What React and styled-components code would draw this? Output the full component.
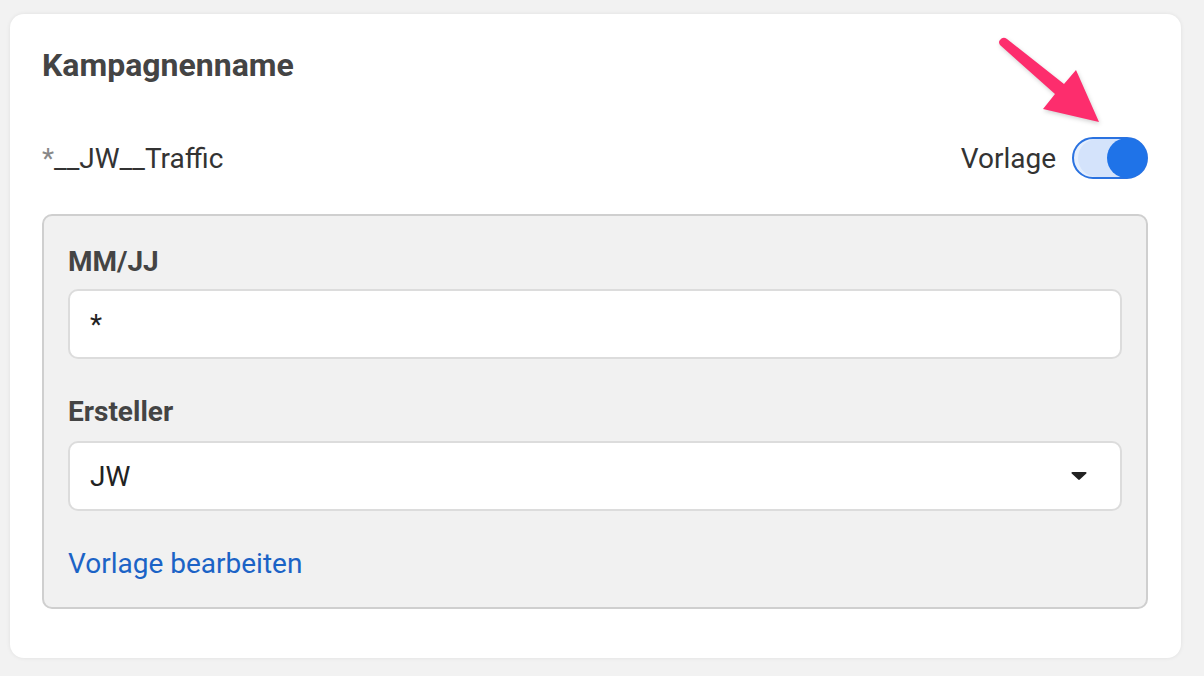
import React from "react";
import styled, { createGlobalStyle } from "styled-components";

const GlobalStyle = createGlobalStyle`
  html, body {
    margin: 0;
    padding: 0;
    background: #f2f2f2;
    font-family: Roboto, "Liberation Sans", Arial, sans-serif;
  }
`;

const Page = styled.div`
  padding: 14px 23px 18px 10px;
  position: relative;
`;

const Card = styled.div`
  background: #fff;
  border-radius: 14px;
  box-shadow: 0 0 4px rgba(0, 0, 0, 0.08);
  padding: 35px 33px 49px 32px;
  position: relative;
`;

const Title = styled.h2`
  margin: 0;
  font-size: 32px;
  line-height: 32px;
  font-weight: 700;
  color: #444;
`;

const Row = styled.div`
  display: flex;
  align-items: center;
  justify-content: space-between;
  height: 44px;
  margin-top: 55px;
`;

const Name = styled.span`
  font-size: 28px;
  color: #333;
`;

const Star = styled.span`
  color: #888;
`;

const ToggleWrap = styled.label`
  display: flex;
  align-items: center;
  gap: 16px;
  font-size: 28px;
  color: #333;
`;

const Track = styled.span`
  box-sizing: border-box;
  width: 76px;
  height: 42px;
  border-radius: 21px;
  border: 2px solid #2a72e0;
  background: #d4e3fb;
  box-shadow: inset 4px 0 0 #e4eefd;
  display: flex;
  align-items: center;
  justify-content: ${(p) => (p.$on ? "flex-end" : "flex-start")};
`;

const Knob = styled.span`
  width: 40px;
  height: 40px;
  margin-right: -1px;
  border-radius: 50%;
  background: #1f73e8;
`;

const Group = styled.div`
  margin-top: 34px;
  background: #f1f1f1;
  border: 2px solid #cfcfcf;
  border-radius: 10px;
  padding: 31px 24px 28px 24px;
`;

const Label = styled.div`
  font-size: 28px;
  line-height: 30px;
  font-weight: 700;
  color: #444;
  margin-top: ${(p) => p.$gap || 0}px;
`;

const Field = styled.div`
  box-sizing: border-box;
  height: 70px;
  margin-top: ${(p) => p.$gap || 12}px;
  background: #fff;
  border: 2px solid #dcdcdc;
  border-radius: 10px;
  padding: 0 33px 0 20px;
  display: flex;
  align-items: center;
  justify-content: space-between;
  font-size: 28px;
  color: #222;
`;

const Caret = styled.svg`
  width: 16px;
  height: 10px;
`;

const Link = styled.a`
  display: block;
  margin-top: 38px;
  font-size: 28px;
  line-height: 30px;
  color: #1b63c6;
  text-decoration: none;
`;

const Arrow = styled.svg`
  position: absolute;
  left: 990px;
  top: 30px;
  width: 120px;
  height: 100px;
  filter: drop-shadow(1px 2px 2px rgba(0, 0, 0, 0.18));
`;

export default function App() {
  return (
    <>
      <GlobalStyle />
      <Page>
        <Card>
          <Title>Kampagnenname</Title>
          <Row>
            <Name>
              <Star>*</Star>__JW__Traffic
            </Name>
            <ToggleWrap>
              Vorlage
              <Track $on>
                <Knob />
              </Track>
            </ToggleWrap>
          </Row>
          <Group>
            <Label>MM/JJ</Label>
            <Field $gap={12}>*</Field>
            <Label $gap={38}>Ersteller</Label>
            <Field $gap={14}>
              JW
              <Caret viewBox="0 0 16 10">
                <path d="M1.5 1h13c1 0 1.4 1 .8 1.6L8.8 8.6c-.4.5-1.2.5-1.6 0L.7 2.6C.1 2 .5 1 1.5 1z" fill="#222" />
              </Caret>
            </Field>
            <Link href="#">Vorlage bearbeiten</Link>
          </Group>
        </Card>
        <Arrow viewBox="0 0 120 100">
          <path
            d="M10 10 Q13 6 17 9 L74 54 L86 40 L109 92 L53 79 L65 64 L10 15 Q8 12 10 10 Z"
            fill="#fd2d6d"
          />
        </Arrow>
      </Page>
    </>
  );
}
